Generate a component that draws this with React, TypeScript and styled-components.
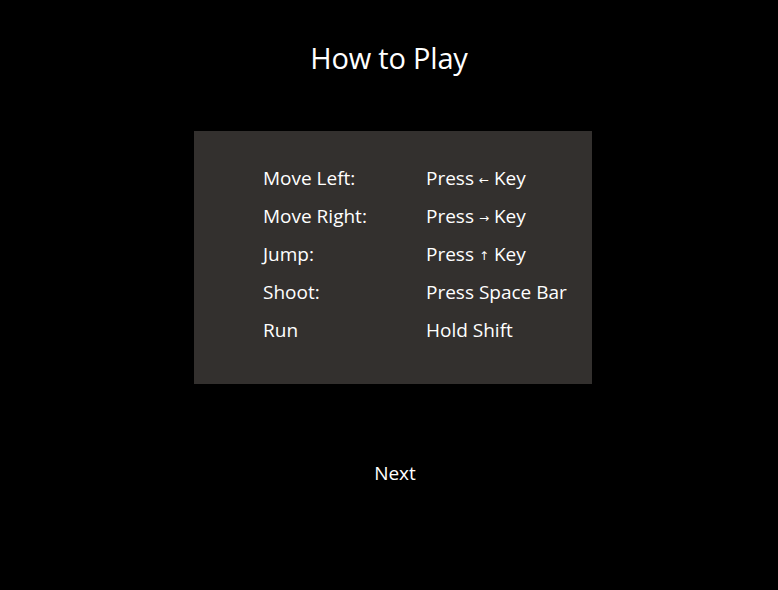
import React from "react";
import styled, { createGlobalStyle } from "styled-components";

const Global = createGlobalStyle`
  html, body { margin: 0; padding: 0; background: #000; }
  body { font-family: "Open Sans", "Noto Sans", sans-serif; color: #fff; }
`;

const Page = styled.div`
  width: 778px;
  height: 590px;
  display: flex;
  flex-direction: column;
  align-items: center;
  background: #000;
`;

const Title = styled.h1`
  margin: 38px 0 0;
  font-size: 29px;
  font-weight: 400;
  line-height: 40px;
  letter-spacing: -0.2px;
`;

const Panel = styled.div`
  margin: 53px 0 0 8px;
  width: 398px;
  height: 253px;
  box-sizing: border-box;
  background: #33302e;
  padding: 34px 0 0 69px;
`;

const Grid = styled.div`
  display: grid;
  grid-template-columns: 163px auto;
  grid-template-rows: repeat(4, 38px) 36px;
  font-size: 19px;
  line-height: 26px;
`;

const Cell = styled.div`
  white-space: nowrap;
`;

const Arrow = styled.span`
  font-family: "DejaVu Sans", sans-serif;
  font-size: 12px;
  display: inline-block;
  vertical-align: 1px;
`;

const NextButton = styled.button`
  margin-top: 76px;
  margin-left: 12px;
  background: none;
  border: none;
  padding: 0;
  color: #fff;
  font-family: inherit;
  font-size: 19px;
  line-height: 26px;
  cursor: pointer;
`;

const rows: [string, React.ReactNode][] = [
  ["Move Left:", <>Press <Arrow>{"\u2190"}</Arrow> Key</>],
  ["Move Right:", <>Press <Arrow>{"\u2192"}</Arrow> Key</>],
  ["Jump:", <>Press <Arrow>{"\u2191"}</Arrow> Key</>],
  ["Shoot:", "Press Space Bar"],
  ["Run", "Hold Shift"],
];

export default function App() {
  return (
    <Page>
      <Global />
      <Title>How to Play</Title>
      <Panel>
        <Grid>
          {rows.map(([a, b]) => (
            <React.Fragment key={a}>
              <Cell>{a}</Cell>
              <Cell>{b}</Cell>
            </React.Fragment>
          ))}
        </Grid>
      </Panel>
      <NextButton>Next</NextButton>
    </Page>
  );
}
